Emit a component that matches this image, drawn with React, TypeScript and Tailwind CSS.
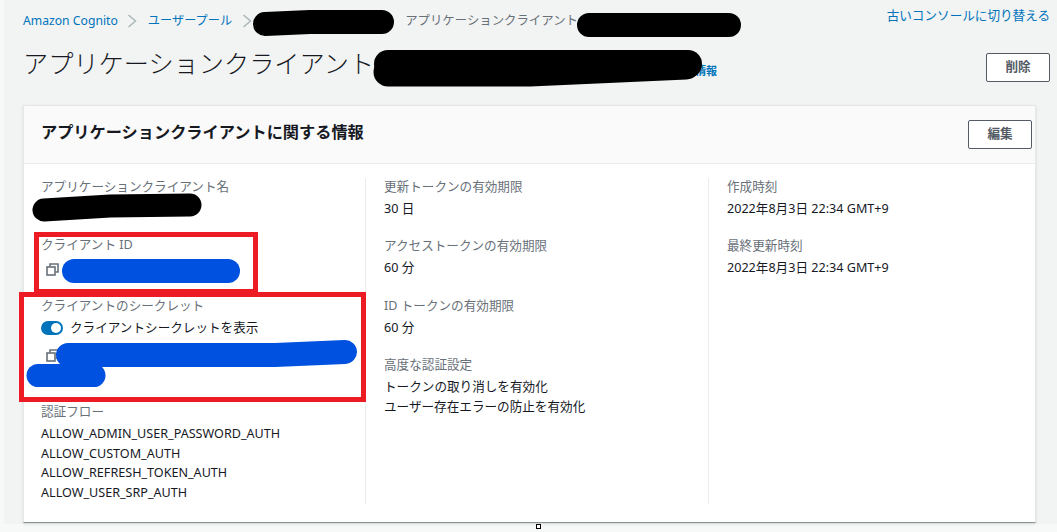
const font = { fontFamily: '"Noto Sans", "Noto Sans CJK JP", sans-serif' };

function Chevron() {
  return (
    <svg width="10" height="14" viewBox="0 0 10 14" fill="none" stroke="#aab7b8" strokeWidth="1.5" className="shrink-0">
      <path d="M1.5 1l7 6-7 6" />
    </svg>
  );
}

function CopyIcon() {
  return (
    <svg width="13" height="13" viewBox="0 0 13 13" fill="none" stroke="#687078" strokeWidth="1.6" className="shrink-0">
      <path d="M4 3.5V1h8v8H9.5" />
      <rect x="1" y="4" width="8" height="8" fill="white" />
    </svg>
  );
}

function Field({ label, value, className }: { label: string; value?: string; className?: string }) {
  return (
    <div className={className}>
      <div className="text-[12.6px] leading-[18px] text-[#687078]">{label}</div>
      {value && <div className="mt-[4px] text-[12.6px] leading-[18px] text-[#16191f]">{value}</div>}
    </div>
  );
}

export default function App() {
  return (
    <div style={font} className="relative h-[532px] w-[1057px] overflow-hidden bg-[#f7f8f8]">
      <div className="ml-[4px] h-[524px] bg-[#f2f3f3] pl-[19px] pr-[7px]">
        {/* breadcrumb */}
        <div className="flex h-[42px] items-center justify-between">
          <div className="flex items-center text-[12.2px] text-[#0073bb]">
            <span>Amazon Cognito</span>
            <span className="ml-[9px]"><Chevron /></span>
            <span className="ml-[11px]">ユーザープール</span>
            <span className="ml-[10px]"><Chevron /></span>
            <span className="ml-[153px] text-[12.4px] text-[#687078]">アプリケーションクライアント</span>
          </div>
          <a className="-mt-[10px] text-[12.6px] text-[#0073bb]">古いコンソールに切り替える</a>
        </div>

        {/* title row */}
        <div className="flex h-[63px] items-start justify-between">
          <div className="-mt-[1px] flex items-end">
            <h1 className="text-[25.2px] leading-[44px] font-light text-[#16191f]">アプリケーションクライアント</h1>
            <a className="mb-[6px] ml-[321px] text-[11px] font-bold leading-4 text-[#0073bb]">情報</a>
          </div>
          <button className="mt-[11px] h-[29px] w-[64px] rounded-[2px] border border-[#545b64] bg-white text-[12.6px] font-bold text-[#545b64]">削除</button>
        </div>

        {/* card */}
        <div className="mr-[14px] h-[418px] border border-[#e5e7e8] border-b-[#879596] bg-white shadow-sm">
          <div className="flex h-[58px] items-center justify-between border-b border-[#eaeded] bg-[#fafafa] pl-[17px] pr-[3px]">
            <h2 className="-mt-[5px] text-[16.2px] font-bold text-[#16191f]">アプリケーションクライアントに関する情報</h2>
            <button className="h-[29px] w-[64px] rounded-[2px] border border-[#545b64] bg-white text-[12.6px] font-bold text-[#545b64]">編集</button>
          </div>
          <div className="grid grid-cols-[342px_343px_1fr] pt-[14px]">
            <div className="h-[326px] border-r border-[#eaeded] pl-[17px]">
              <Field label="アプリケーションクライアント名" />
              <Field label="クライアント ID" className="mt-[40px]" />
              <div className="mt-[9px] ml-[5px]"><CopyIcon /></div>
              <Field label="クライアントのシークレット" className="mt-[21px]" />
              <div className="mt-[4px] flex items-center gap-[7px] text-[12.6px] leading-[18px] text-[#16191f]">
                <span className="flex h-[14px] w-[22px] items-center justify-end rounded-full bg-[#0073bb] pr-[2px]">
                  <span className="h-[10px] w-[10px] rounded-full bg-white" />
                </span>
                クライアントシークレットを表示
              </div>
              <div className="mt-[12px] ml-[5px]"><CopyIcon /></div>
              <Field label="認証フロー" className="mt-[41px]" />
              <div className="mt-[3px] text-[12.6px] leading-[19.6px] text-[#16191f]">
                <div>ALLOW_ADMIN_USER_PASSWORD_AUTH</div>
                <div>ALLOW_CUSTOM_AUTH</div>
                <div>ALLOW_REFRESH_TOKEN_AUTH</div>
                <div>ALLOW_USER_SRP_AUTH</div>
              </div>
            </div>
            <div className="h-[326px] border-r border-[#eaeded] pl-[18px]">
              <Field label="更新トークンの有効期限" value="30 日" />
              <Field label="アクセストークンの有効期限" value="60 分" className="mt-[19px]" />
              <Field label="ID トークンの有効期限" value="60 分" className="mt-[20px]" />
              <Field label="高度な認証設定" className="mt-[19px]" />
              <div className="mt-[3px] text-[12.6px] leading-[20px] text-[#16191f]">
                <div>トークンの取り消しを有効化</div>
                <div>ユーザー存在エラーの防止を有効化</div>
              </div>
            </div>
            <div className="pl-[18px]">
              <Field label="作成時刻" value="2022年8月3日 22:34 GMT+9" />
              <Field label="最終更新時刻" value="2022年8月3日 22:34 GMT+9" className="mt-[19px]" />
            </div>
          </div>
        </div>
      </div>

      {/* annotations painted over the screenshot */}
      <svg width="1057" height="532" className="pointer-events-none absolute top-0 left-0">
        <g stroke="#000" strokeLinecap="round" fill="none">
          <path d="M265 24 L310 22 H382" strokeWidth="24" />
          <path d="M589 25 H729" strokeWidth="24" />
          <path d="M388 64 H688" strokeWidth="28" />
          <path d="M388 72 H530 L686 65" strokeWidth="29" />
          <path d="M44 210 L110 206 L190 205" strokeWidth="23" />
        </g>
        <g stroke="#0051e0" strokeLinecap="round" fill="none">
          <path d="M74 271 H228" strokeWidth="24" />
          <path d="M68 355 H275 L345 352" strokeWidth="24" />
          <path d="M38 375.5 H94" strokeWidth="23" />
        </g>
        <g stroke="#ed1c24" strokeWidth="5" fill="none">
          <rect x="36.5" y="234.5" width="219" height="57" />
          <rect x="21.5" y="294.5" width="342" height="105" />
        </g>
      </svg>
      <div className="absolute top-[524px] left-[536px] h-[5px] w-[5px] border border-black bg-white" />
    </div>
  );
}
